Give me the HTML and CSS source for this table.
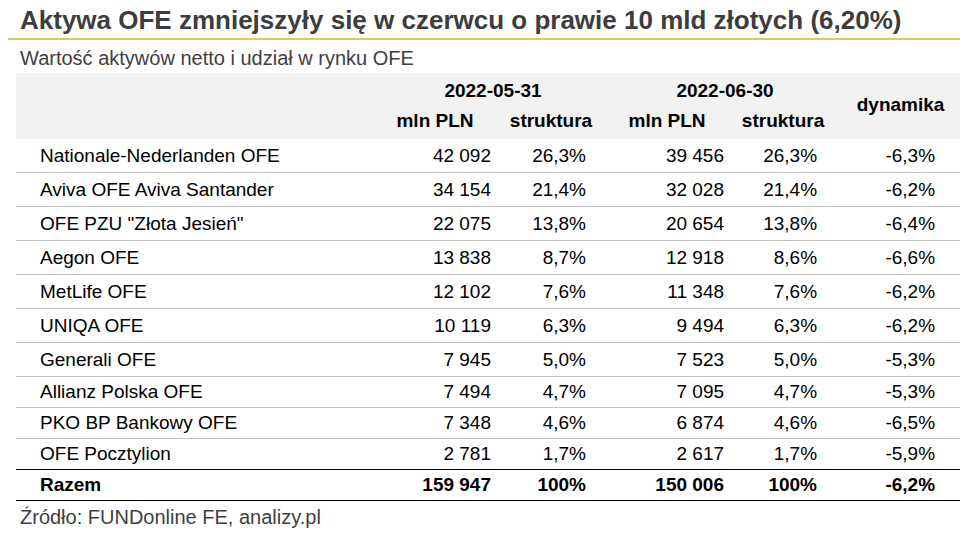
FILE: index.html
```html
<!DOCTYPE html>
<html lang="pl">
<head>
<meta charset="utf-8">
<title>Aktywa OFE</title>
<link rel="stylesheet" href="styles.css">
</head>
<body>
<div class="page">
  <h1 class="title">Aktywa OFE zmniejszyły się w czerwcu o prawie 10 mld złotych (6,20%)</h1>
  <p class="subtitle">Wartość aktywów netto i udział w rynku OFE</p>
  <table class="data">
    <colgroup>
      <col class="c-name"><col class="c-num"><col class="c-num"><col class="c-num"><col class="c-num"><col class="c-dyn">
    </colgroup>
    <thead>
      <tr class="h1">
        <th></th>
        <th colspan="2" class="date">2022-05-31</th>
        <th colspan="2" class="date">2022-06-30</th>
        <th rowspan="2" class="dyn-h">dynamika</th>
      </tr>
      <tr class="h2">
        <th></th>
        <th>mln PLN</th>
        <th>struktura</th>
        <th>mln PLN</th>
        <th>struktura</th>
      </tr>
    </thead>
    <tbody>
      <tr class="tall"><td class="name">Nationale-Nederlanden OFE</td><td class="v1">42 092</td><td class="v2">26,3%</td><td class="v3">39 456</td><td class="v4">26,3%</td><td class="v5">-6,3%</td></tr>
      <tr class="tall"><td class="name">Aviva OFE Aviva Santander</td><td class="v1">34 154</td><td class="v2">21,4%</td><td class="v3">32 028</td><td class="v4">21,4%</td><td class="v5">-6,2%</td></tr>
      <tr class="tall"><td class="name">OFE PZU "Złota Jesień"</td><td class="v1">22 075</td><td class="v2">13,8%</td><td class="v3">20 654</td><td class="v4">13,8%</td><td class="v5">-6,4%</td></tr>
      <tr class="tall"><td class="name">Aegon OFE</td><td class="v1">13 838</td><td class="v2">8,7%</td><td class="v3">12 918</td><td class="v4">8,6%</td><td class="v5">-6,6%</td></tr>
      <tr class="tall"><td class="name">MetLife OFE</td><td class="v1">12 102</td><td class="v2">7,6%</td><td class="v3">11 348</td><td class="v4">7,6%</td><td class="v5">-6,2%</td></tr>
      <tr class="tall"><td class="name">UNIQA OFE</td><td class="v1">10 119</td><td class="v2">6,3%</td><td class="v3">9 494</td><td class="v4">6,3%</td><td class="v5">-6,2%</td></tr>
      <tr class="tall"><td class="name">Generali OFE</td><td class="v1">7 945</td><td class="v2">5,0%</td><td class="v3">7 523</td><td class="v4">5,0%</td><td class="v5">-5,3%</td></tr>
      <tr class="short"><td class="name">Allianz Polska OFE</td><td class="v1">7 494</td><td class="v2">4,7%</td><td class="v3">7 095</td><td class="v4">4,7%</td><td class="v5">-5,3%</td></tr>
      <tr class="short"><td class="name">PKO BP Bankowy OFE</td><td class="v1">7 348</td><td class="v2">4,6%</td><td class="v3">6 874</td><td class="v4">4,6%</td><td class="v5">-6,5%</td></tr>
      <tr class="short last"><td class="name">OFE Pocztylion</td><td class="v1">2 781</td><td class="v2">1,7%</td><td class="v3">2 617</td><td class="v4">1,7%</td><td class="v5">-5,9%</td></tr>
      <tr class="short total"><td class="name">Razem</td><td class="v1">159 947</td><td class="v2">100%</td><td class="v3">150 006</td><td class="v4">100%</td><td class="v5">-6,2%</td></tr>
    </tbody>
  </table>
  <p class="source">Źródło: FUNDonline FE, analizy.pl</p>
</div>
</body>
</html>
```

FILE: styles.css
```css
html, body {
  margin: 0;
  padding: 0;
  background: #ffffff;
}

body {
  font-family: "Liberation Sans", Arial, sans-serif;
  color: #000000;
}

.page {
  width: 952px;
  padding: 0 0 0 8px;
}

.title {
  margin: 0;
  height: 40px;
  box-sizing: border-box;
  padding: 6px 0 0 12px;
  font-size: 26px;
  line-height: 28px;
  font-weight: bold;
  color: #3d3d3d;
  border-bottom: 2px solid #e5c36b;
  white-space: nowrap;
}

.subtitle {
  margin: 0;
  height: 33px;
  padding: 7px 0 0 12px;
  box-sizing: border-box;
  font-size: 20px;
  line-height: 22px;
  color: #404040;
}

.data {
  margin-left: 8px;
  width: 944px;
  border-collapse: collapse;
  table-layout: fixed;
  font-size: 19px;
}

.c-name { width: 361px; }
.c-num { width: 116px; }
.c-dyn { width: 119px; }

.data thead th {
  background: #f2f2f2;
  font-weight: bold;
  text-align: center;
  padding: 0;
  line-height: 22px;
  color: #000;
}

.data thead .h1 th {
  height: 29px;
  vertical-align: bottom;
  padding-bottom: 2px;
}

.data thead .h2 th {
  height: 33px;
  vertical-align: middle;
  padding-bottom: 2px;
}

.data thead .h1 .dyn-h {
  vertical-align: middle;
  padding-bottom: 2px;
}

.data td {
  padding: 0;
  line-height: 22px;
  border-bottom: 1px solid #c4c4c4;
  white-space: nowrap;
}

.data tr.tall td { height: 33px; }
.data tr.short td { height: 30px; }

.data tr.last td { border-bottom: 1px solid #000; }
.data tr.total td {
  border-bottom: 1px solid #000;
  font-weight: bold;
}

.name { padding-left: 24px !important; text-align: left; }
.v1 { text-align: right; padding-right: 2px !important; }
.v2 { text-align: right; padding-right: 23px !important; }
.v3 { text-align: right; padding-right: 1px !important; }
.v4 { text-align: right; padding-right: 24px !important; }
.v5 { text-align: right; padding-right: 25px !important; }

.source {
  margin: 0;
  padding: 5px 0 0 12px;
  font-size: 20px;
  line-height: 22px;
  color: #404040;
}
```
